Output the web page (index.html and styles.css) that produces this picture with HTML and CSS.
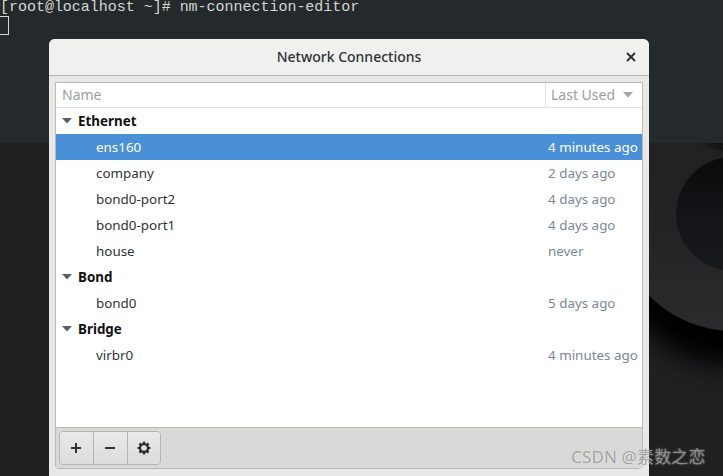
FILE: index.html
```html
<!DOCTYPE html>
<html lang="en">
<head>
<meta charset="utf-8">
<title>Network Connections</title>
<link rel="stylesheet" href="styles.css">
</head>
<body>
<div class="desktop">
  <svg class="wallpaper" width="723" height="333" viewBox="0 0 723 333" aria-hidden="true">
    <defs>
      <filter id="soft" x="-30%" y="-30%" width="160%" height="160%"><feGaussianBlur stdDeviation="13"/></filter>
      <filter id="soft2" x="-30%" y="-60%" width="160%" height="220%"><feGaussianBlur stdDeviation="3"/></filter>
      <linearGradient id="ring" x1="0" y1="0" x2="0" y2="1"><stop offset="0" stop-color="#201f22"/><stop offset=".55" stop-color="#232225"/><stop offset="1" stop-color="#2b2a2d"/></linearGradient>
      <linearGradient id="hole" x1="0" y1="0" x2="0" y2="1"><stop offset="0" stop-color="#0a0a0c"/><stop offset=".5" stop-color="#131417"/><stop offset="1" stop-color="#18191c"/></linearGradient>
    </defs>
    <circle cx="733" cy="99" r="124" fill="#060606" filter="url(#soft)"/>
    <circle cx="733" cy="71" r="117" fill="url(#ring)"/>
    <circle cx="733" cy="71" r="57" fill="url(#hole)"/>
    <ellipse cx="730" cy="-3" rx="24" ry="8" fill="#0a0a0b" filter="url(#soft2)"/>
  </svg>
  <div class="terminal">
    <div class="term-line">[root@localhost ~]# nm-connection-editor</div>
    <div class="term-cursor"></div>
  </div>
  <section class="dialog">
    <header class="titlebar">
      <h1 class="title">Network Connections</h1>
      <svg class="close" width="10" height="10" viewBox="0 0 10 10" aria-hidden="true"><path d="M1 1 L9 9 M9 1 L1 9" stroke="#2e3436" stroke-width="2"/></svg>
    </header>
    <div class="content">
      <div class="frame">
        <div class="list-head">
          <div class="col-name">Name</div>
          <div class="col-used">Last Used<svg class="sort" width="10" height="6" viewBox="0 0 10 6" aria-hidden="true"><path d="M0 0 H10 L5 5.5 Z" fill="#a4a6a6"/></svg></div>
        </div>
        <div class="list-body">
          <div class="row group"><svg class="arrow" width="10" height="6" viewBox="0 0 10 6" aria-hidden="true"><path d="M0 0 H10 L5 5.5 Z" fill="#5c6063"/></svg><span>Ethernet</span></div>
          <div class="row item selected"><span class="name">ens160</span><span class="used">4 minutes ago</span></div>
          <div class="row item"><span class="name">company</span><span class="used">2 days ago</span></div>
          <div class="row item"><span class="name">bond0-port2</span><span class="used">4 days ago</span></div>
          <div class="row item"><span class="name">bond0-port1</span><span class="used">4 days ago</span></div>
          <div class="row item"><span class="name">house</span><span class="used">never</span></div>
          <div class="row group"><svg class="arrow" width="10" height="6" viewBox="0 0 10 6" aria-hidden="true"><path d="M0 0 H10 L5 5.5 Z" fill="#5c6063"/></svg><span>Bond</span></div>
          <div class="row item"><span class="name">bond0</span><span class="used">5 days ago</span></div>
          <div class="row group"><svg class="arrow" width="10" height="6" viewBox="0 0 10 6" aria-hidden="true"><path d="M0 0 H10 L5 5.5 Z" fill="#5c6063"/></svg><span>Bridge</span></div>
          <div class="row item"><span class="name">virbr0</span><span class="used">4 minutes ago</span></div>
        </div>
        <div class="toolbar">
          <div class="btn-group">
            <button class="btn btn-text" type="button"><svg width="12" height="12" viewBox="0 0 12 12" aria-hidden="true"><path d="M6 1 V11 M1 6 H11" stroke="#2e3436" stroke-width="2"/></svg></button>
            <button class="btn btn-text" type="button"><svg width="12" height="12" viewBox="0 0 12 12" aria-hidden="true"><path d="M1 6 H11" stroke="#2e3436" stroke-width="2"/></svg></button>
            <button class="btn" type="button"><svg width="14" height="14" viewBox="0 0 14 14" aria-hidden="true"><circle cx="7" cy="7" r="4" fill="none" stroke="#2e3436" stroke-width="2.4"/><path d="M7 .5 V3 M7 11 V13.5 M.5 7 H3 M11 7 H13.5 M2.4 2.4 L4.2 4.2 M9.8 9.8 L11.6 11.6 M11.6 2.4 L9.8 4.2 M4.2 9.8 L2.4 11.6" stroke="#2e3436" stroke-width="2.2"/></svg></button>
          </div>
        </div>
      </div>
    </div>
  </section>
  <div class="watermark">CSDN @素数之恋</div>
</div>
</body>
</html>
```
FILE: styles.css
```css
html, body { margin: 0; padding: 0; }
body { width: 723px; height: 476px; overflow: hidden; background: #201f22; }
.desktop { position: relative; width: 723px; height: 476px; overflow: hidden; background: #201f22; font-family: "Noto Sans", sans-serif; }
.wallpaper { position: absolute; left: 0; top: 143px; }
.terminal { position: relative; height: 143px; background: #24292c; }
.term-line { font-family: "Liberation Mono", monospace; font-size: 15px; line-height: 16px; color: #d3d7cf; white-space: pre; letter-spacing: -.02px; }
.term-cursor { width: 8px; height: 17px; border: 1px solid #d3d7cf; margin-left: -1px; }
.dialog { position: absolute; left: 49px; top: 39px; width: 600px; height: 445px; background: #e8e8e7; border-radius: 6px 6px 0 0; display: flex; flex-direction: column; }
.titlebar { height: 36px; flex: none; display: flex; align-items: center; justify-content: center; position: relative; background: #f0f0ef; border-bottom: 1px solid #b5b5b1; border-radius: 6px 6px 0 0; }
.title { margin: 0 0 2px; font-size: 14px; font-weight: 500; color: #2e3436; }
.close { position: absolute; right: 13px; top: 13px; }
.content { flex: 1; padding: 6px 6px 7px; }
.frame { width: 586px; height: 385px; border: 1px solid #b8b8b4; border-radius: 0 0 4px 4px; display: flex; flex-direction: column; background: #fff; }
.list-head { height: 24px; flex: none; display: flex; border-bottom: 1px solid #e2e2e1; color: #9c9e9e; font-size: 14px; line-height: 24px; }
.col-name { flex: 1; padding-left: 6px; }
.col-used { width: 97px; flex: none; border-left: 1px solid #e2e2e1; padding-left: 5px; display: flex; align-items: center; gap: 8px; box-sizing: border-box; }
.list-body { flex: 1; }
.row { height: 26px; display: flex; align-items: center; font-size: 13.4px; color: #2e3436; box-sizing: border-box; padding-bottom: 1px; }
.group { font-weight: 700; color: #111; padding-left: 6px; }
.arrow { margin-right: 6px; }
.item { position: relative; padding-left: 40px; }
.name { flex: 1; }
.used { width: 94px; flex: none; color: #7b8797; white-space: nowrap; }
.selected { background: #4a90d9; color: #fff; }
.selected .used { color: #fff; }
.toolbar { height: 41px; flex: none; background: #d9d9d8; border-top: 1px solid #b8b8b4; border-radius: 0 0 4px 4px; padding: 3px 3px; box-sizing: border-box; }
.btn-group { display: inline-flex; height: 34px; border: 1px solid #b4b4b0; border-radius: 4px; overflow: hidden; box-sizing: border-box; }
.btn { width: 34px; padding: 0; border: 0; border-right: 1px solid #b4b4b0; background: linear-gradient(#e9e9e8, #dcdcdb); display: flex; align-items: center; justify-content: center; }
.btn:last-child { border-right: 0; width: 32px; }
.btn-text svg { margin-right: 1px; }
.watermark { position: absolute; left: 571px; top: 446px; font-family: "Noto Sans", "Noto Sans CJK SC", sans-serif; font-size: 17px; letter-spacing: .15px; line-height: 22px; color: rgba(150,150,150,.85); text-shadow: 0 0 2px rgba(255,255,255,.45); white-space: nowrap; }
```
